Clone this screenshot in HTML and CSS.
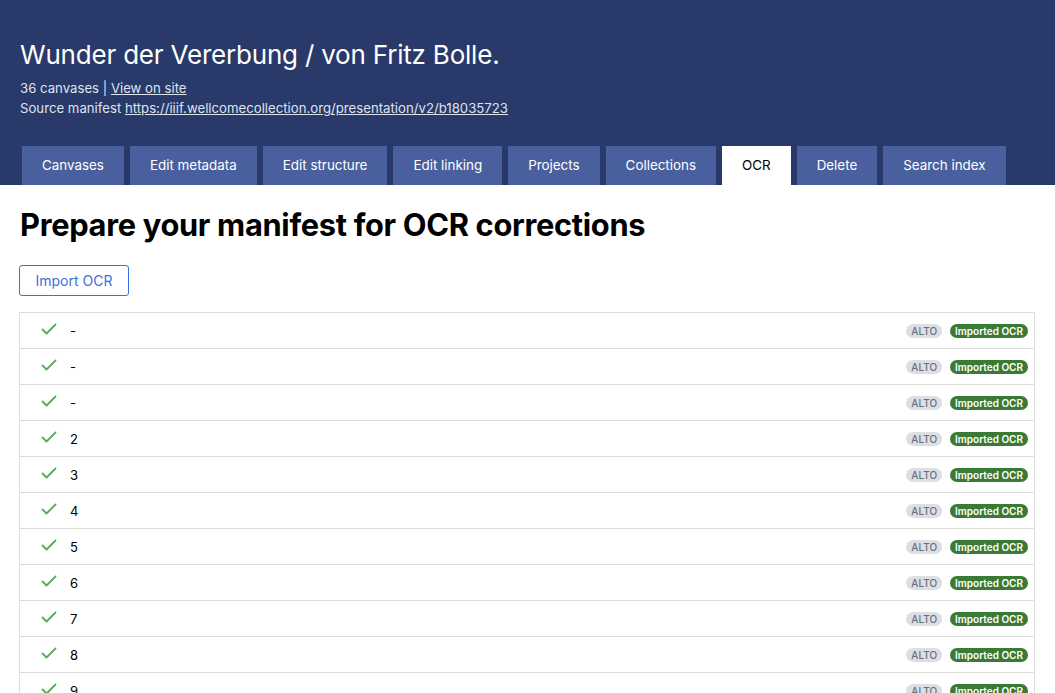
FILE: index.html
```html
<!DOCTYPE html>
<html>
<head>
<meta charset="utf-8">
<link rel="stylesheet" href="styles.css">
</head>
<body>
<header class="header">
  <h1 class="title">Wunder der Vererbung / von Fritz Bolle.</h1>
  <div class="meta">36 canvases | <a href="#">View on site</a></div>
  <div class="meta">Source manifest <a href="#">https://iiif.wellcomecollection.org/presentation/v2/b18035723</a></div>
  <nav class="tabs">
    <a class="tab">Canvases</a>
    <a class="tab">Edit metadata</a>
    <a class="tab">Edit structure</a>
    <a class="tab">Edit linking</a>
    <a class="tab">Projects</a>
    <a class="tab">Collections</a>
    <a class="tab active">OCR</a>
    <a class="tab">Delete</a>
    <a class="tab">Search index</a>
  </nav>
</header>
<main class="main">
  <h2 class="heading">Prepare your manifest for OCR corrections</h2>
  <button class="btn">Import OCR</button>
  <ul class="list" id="list"></ul>
</main>
<script>
  const labels = ['-', '-', '-', '2', '3', '4', '5', '6', '7', '8', '9'];
  const list = document.getElementById('list');
  labels.forEach(l => {
    const li = document.createElement('li');
    li.className = 'row';
    li.innerHTML = '<svg class="check" width="16" height="12" viewBox="0 0 16 12"><path d="M1.5 6.5 L5.5 10.5 L14.5 1.5" fill="none" stroke="#5aa85a" stroke-width="1.8" stroke-linecap="round" stroke-linejoin="round"/></svg>' +
      '<span class="label">' + l + '</span>' +
      '<span class="badges"><span class="badge grey">ALTO</span><span class="badge green">Imported OCR</span></span>';
    list.appendChild(li);
  });
</script>
</body>
</html>
```
FILE: styles.css
```css
* { box-sizing: border-box; }
html, body { margin: 0; padding: 0; }
body {
  font-family: Inter, "Noto Sans", Roboto, sans-serif;
  color: #000;
  background: #fff;
  overflow: hidden;
}
.header {
  background: #29396a;
  padding: 38px 0 0 20px;
  color: #fff;
}
.title {
  margin: 0 0 6px 0;
  font-size: 26px;
  font-weight: 400;
  line-height: 34px;
  letter-spacing: -0.2px;
}
.meta {
  font-size: 13.2px;
  line-height: 20px;
  color: #dfe3ee;
}
.meta a { color: #dfe3ee; text-decoration: underline; }
.tabs {
  display: flex;
  gap: 6px;
  margin-top: 28px;
  padding-left: 2px;
}
.tab {
  display: block;
  background: #4a5f9e;
  color: #fff;
  font-size: 13.4px;
  line-height: 39px;
  height: 39px;
  padding: 0 20px;
}
.tab.active { background: #fff; color: #000; }
.main { padding: 0 20px 0 19px; }
.heading {
  font-size: 30.8px;
  font-weight: 700;
  margin: 22px 0 0 1px;
  line-height: 36px;
  letter-spacing: -0.3px;
}
.btn {
  margin-top: 22px;
  font-family: inherit;
  font-size: 14px;
  color: #3b6fe0;
  background: #fff;
  border: 1px solid #3b6fe0;
  border-radius: 3px;
  height: 31px;
  width: 110px;
  padding: 0;
}
.list {
  list-style: none;
  margin: 16px 0 0 0;
  padding: 0;
  border: 1px solid #ddd;
  width: 1016px;
}
.row {
  display: flex;
  align-items: center;
  height: 36px;
  border-top: 1px solid #ddd;
  padding: 0 6px 0 21px;
}
.row:first-child { border-top: none; height: 35px; }
.check { margin-right: 13px; margin-top: -3px; }
.label { font-size: 13px; }
.badges { margin-left: auto; display: flex; gap: 8px; }
.badge {
  font-size: 10px;
  font-weight: 600;
  line-height: 14px;
  height: 14px;
  padding: 0 5px;
  border-radius: 7px;
}
.badge.grey { background: #dcdfe6; color: #6b6f78; font-weight: 500; }
.badge.green { background: #3b7a35; color: #fff; }
```
